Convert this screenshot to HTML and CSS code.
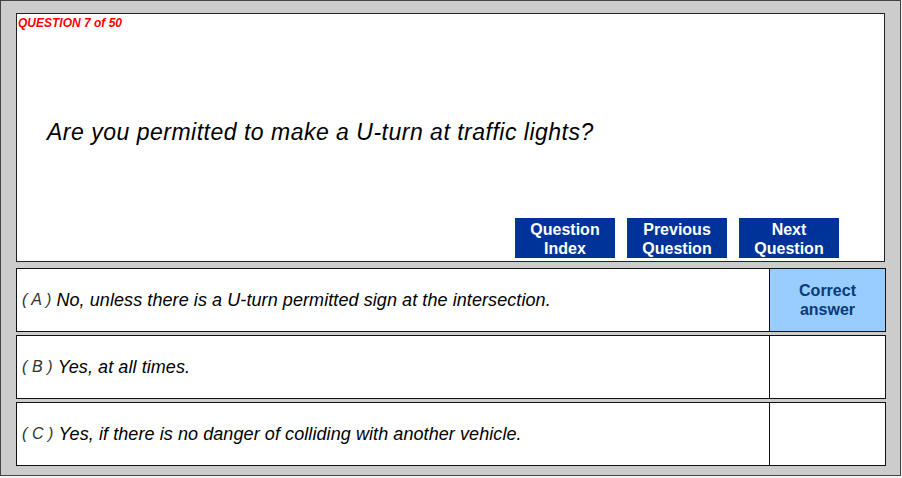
FILE: index.html
```html
<!DOCTYPE html>
<html lang="en">
<head>
  <meta charset="UTF-8">
  <title>Question 7 of 50</title>
  <link rel="stylesheet" href="styles.css">
</head>
<body>

  <div class="frame">

    <div class="question-box">
      <div class="question-no">QUESTION 7 of 50</div>
      <div class="question-text">Are you permitted to make a U-turn at traffic lights?</div>

      <div class="nav">
        <button class="nav-btn">Question<br>Index</button>
        <button class="nav-btn">Previous<br>Question</button>
        <button class="nav-btn">Next<br>Question</button>
      </div>
    </div>

    <!-- answers -->
    <div class="answers">
      <div class="answer">
        <div class="answer-text"><span class="letter">( A )</span> No, unless there is a U-turn permitted sign at the intersection.</div>
        <div class="answer-mark correct">Correct<br>answer</div>
      </div>
      <div class="answer">
        <div class="answer-text"><span class="letter">( B )</span> Yes, at all times.</div>
        <div class="answer-mark"></div>
      </div>
      <div class="answer">
        <div class="answer-text"><span class="letter">( C )</span> Yes, if there is no danger of colliding with another vehicle.</div>
        <div class="answer-mark"></div>
      </div>
    </div>

  </div>

</body>
</html>
```

FILE: styles.css
```css
body {
  margin: 0;
  font-family: "Liberation Sans", Arial, sans-serif;
  background-color: #f4f4f4;
}

.frame {
  width: 869px;
  height: 462px;
  padding: 12px 15px 0 15px;
  background-color: #cccccc;
  border: 1px solid #444;
}

.question-box {
  height: 247px;
  background-color: #fff;
  border: 1px solid #222;
  display: flex;
  flex-direction: column;
}

.question-no {
  padding: 2px 0 0 1px;
  font-size: 12px;
  line-height: 14px;
  font-weight: bold;
  font-style: italic;
  color: #ff0000;
}

.question-text {
  margin-top: 89px;
  padding-left: 30px;
  font-size: 23px;
  line-height: 26px;
  font-style: italic;
  letter-spacing: 0.5px;
  color: #000;
}

.nav {
  margin-top: auto;
  padding: 0 45px 3px 0;
  display: flex;
  justify-content: flex-end;
  gap: 12px;
}

.nav-btn {
  width: 100px;
  height: 40px;
  padding: 1px 0 0 0;
  border: none;
  background-color: #003399;
  color: #fff;
  font-family: "Liberation Sans", Arial, sans-serif;
  font-size: 16px;
  line-height: 19px;
  font-weight: bold;
  cursor: pointer;
}

.answers {
  margin-top: 6px;
  display: flex;
  flex-direction: column;
  gap: 3px;
}

.answer {
  width: 868px;
  height: 62px;
  background-color: #fff;
  border: 1px solid #111;
  display: flex;
}

.answer-text {
  flex: 1;
  display: flex;
  align-items: center;
  padding-left: 5px;
  font-size: 18px;
  font-style: italic;
  letter-spacing: 0.08px;
  color: #000;
}

.letter {
  color: #333;
  font-size: 16px;
  margin-right: 5px;
}

.answer-mark {
  width: 115px;
  border-left: 1px solid #111;
}

.correct {
  display: flex;
  align-items: center;
  justify-content: center;
  text-align: center;
  background-color: #99ccff;
  color: #0b3a78;
  font-size: 16px;
  line-height: 19px;
  font-weight: bold;
}
```
